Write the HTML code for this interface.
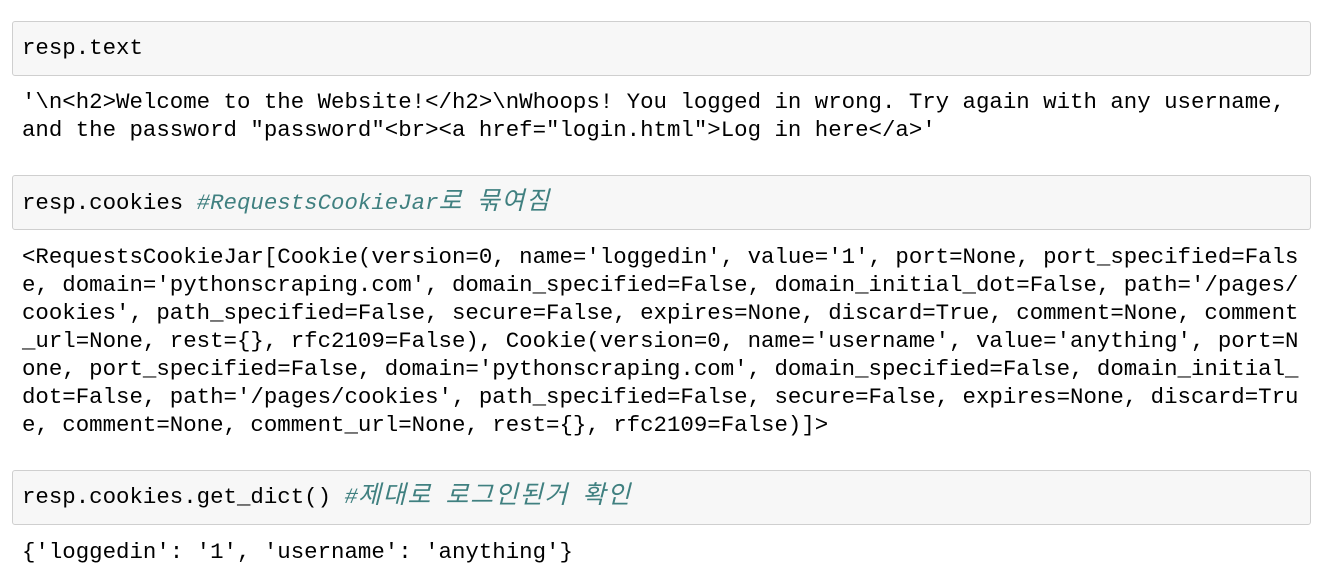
<!DOCTYPE html>
<html><head><meta charset="utf-8"><style>
body{margin:0;background:#fff;width:1329px;height:582px;overflow:hidden;position:relative;font-family:"Liberation Mono","Noto Sans CJK KR",monospace;font-size:22.4px;color:#000}
.box{position:absolute;left:12px;width:1299px;height:55px;background:#f7f7f7;border:1px solid #cfcfcf;border-radius:3px;box-sizing:border-box}
.l{position:absolute;left:22px;height:28px;line-height:28px;white-space:pre}
.c{color:#408080;font-style:italic}
.k{font-family:"Noto Sans CJK KR",sans-serif;font-size:25px;line-height:0;letter-spacing:1.7px}
</style></head><body>
<div class="box" style="top:21px"></div>
<div class="box" style="top:175px"></div>
<div class="box" style="top:470px"></div>
<div class="l" style="top:34px">resp.text</div>
<div class="l" style="top:88px">'\n&lt;h2&gt;Welcome to the Website!&lt;/h2&gt;\nWhoops! You logged in wrong. Try again with any username,</div>
<div class="l" style="top:116px">and the password "password"&lt;br&gt;&lt;a href="login.html"&gt;Log in here&lt;/a&gt;'</div>
<div class="l" style="top:189px">resp.cookies <span class="c">#RequestsCookieJar<span class="k">로</span> <span class="k">묶여짐</span></span></div>
<div class="l" style="top:243px">&lt;RequestsCookieJar[Cookie(version=0, name='loggedin', value='1', port=None, port_specified=Fals</div>
<div class="l" style="top:271px">e, domain='pythonscraping.com', domain_specified=False, domain_initial_dot=False, path='/pages/</div>
<div class="l" style="top:299px">cookies', path_specified=False, secure=False, expires=None, discard=True, comment=None, comment</div>
<div class="l" style="top:327px">_url=None, rest={}, rfc2109=False), Cookie(version=0, name='username', value='anything', port=N</div>
<div class="l" style="top:355px">one, port_specified=False, domain='pythonscraping.com', domain_specified=False, domain_initial_</div>
<div class="l" style="top:383px">dot=False, path='/pages/cookies', path_specified=False, secure=False, expires=None, discard=Tru</div>
<div class="l" style="top:411px">e, comment=None, comment_url=None, rest={}, rfc2109=False)]&gt;</div>
<div class="l" style="top:483px">resp.cookies.get_dict() <span class="c">#<span class="k">제대로</span> <span class="k">로그인된거</span> <span class="k">확인</span></span></div>
<div class="l" style="top:538px">{'loggedin': '1', 'username': 'anything'}</div>
</body></html>
